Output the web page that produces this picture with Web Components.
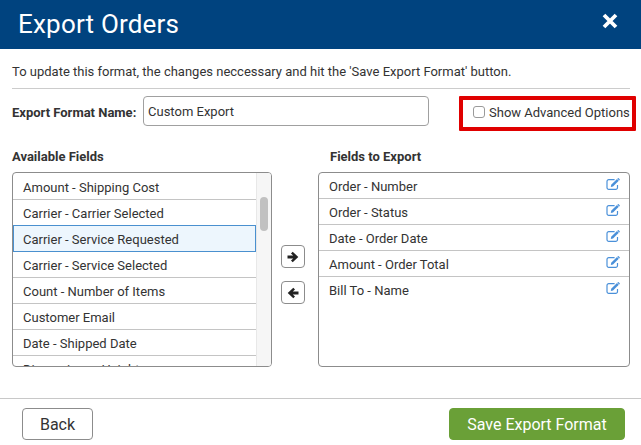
<!DOCTYPE html>
<html>
<head>
<meta charset="utf-8">
<title>Export Orders</title>
<style>
  html, body { margin: 0; padding: 0; background: #fff; }
  body { font-family: Roboto, "Liberation Sans", sans-serif; color: #333; overflow: hidden; }
</style>
</head>
<body>
<export-dialog></export-dialog>
<script>
  const ICON_EDIT = `<svg width="15" height="12" viewBox="0 0 15 12" fill="none">
    <path d="M11.500 7v2.600A1.800 1.800 0 0 1 9.700 11.400H2.800A1.800 1.800 0 0 1 1 9.600V3.400A1.800 1.800 0 0 1 2.800 1.600H8.600" stroke="#4a90d9" stroke-width="1.200"/>
    <path d="M4.800 9l.4-2.200L11 1l1.800 1.800L7 8.600z" fill="#4a90d9"/>
    <path d="M11.900 .2a.6 .6 0 0 1 .8 0l1 1a.6 .6 0 0 1 0 .8l-.5 .5-1.800-1.800z" fill="#4a90d9"/>
  </svg>`;

  class DialogHeader extends HTMLElement {
    connectedCallback() {
      this.attachShadow({ mode: 'open' }).innerHTML = `
      <style>
        :host { display: flex; align-items: center; justify-content: space-between; height: 49px; background: #00437f; color: #fff; padding: 0 23px 0 18px; }
        h1 { margin: 0; font-size: 26px; font-weight: 400; letter-spacing: .2px; line-height: 49px; }
        svg { display: block; margin-top: -7px; }
      </style>
      <h1><slot></slot></h1>
      <svg width="16" height="16" viewBox="0 0 16 16"><path d="M2 2l12 12M14 2L2 14" stroke="#fff" stroke-width="3.800"/></svg>`;
    }
  }

  class FieldList extends HTMLElement {
    connectedCallback() {
      const scroll = this.hasAttribute('scroll');
      this.attachShadow({ mode: 'open' }).innerHTML = `
      <style>
        :host { display: flex; box-sizing: border-box; height: 195px; border: 1px solid #8c8c8c; border-radius: 4px; overflow: hidden; background: #fff; }
        :host([scroll]) .items { padding-top: 1px; }
        .items { flex: 1; min-width: 0; overflow: hidden; }
        .track { width: 14px; flex: none; position: relative; background: #f6f6f6; border-left: 1px solid #e8e8e8; }
        .thumb { position: absolute; left: 3px; top: 24px; width: 8px; height: 34px; border-radius: 4px; background: #c1c1c1; }
      </style>
      <div class="items"><slot></slot></div>
      ${scroll ? '<div class="track"><div class="thumb"></div></div>' : ''}`;
    }
  }

  class FieldItem extends HTMLElement {
    connectedCallback() {
      const editable = this.hasAttribute('editable');
      this.attachShadow({ mode: 'open' }).innerHTML = `
      <style>
        :host { display: flex; align-items: center; justify-content: space-between; box-sizing: border-box; height: 26px; padding: 2px 10px 0; font-size: 13px; color: #333; border: 0 solid transparent; border-bottom: 1px solid #c4c4c4; white-space: nowrap; }
        :host([selected]) { height: 27px; margin-top: -1px; padding-left: 9px; border: 1px solid #4a90cf; background: #edf6fd; }
        :host([editable]) { padding: 2px 8px 0 10px; }
        :host([last]) { border-bottom-color: transparent; }
        svg { display: block; margin-top: -5px; }
      </style>
      <span><slot></slot></span>${editable ? ICON_EDIT : ''}`;
    }
  }

  class ArrowButton extends HTMLElement {
    connectedCallback() {
      const left = this.getAttribute('dir') === 'left';
      this.attachShadow({ mode: 'open' }).innerHTML = `
      <style>
        :host { display: flex; align-items: center; justify-content: center; box-sizing: border-box; width: 24px; height: 23px; border: 1px solid #8c8c8c; border-radius: 4px; background: #fff; }
        svg { display: block; ${left ? 'transform: scaleX(-1);' : ''} }
      </style>
      <svg width="12" height="12" viewBox="0 0 12 12"><path d="M.500 4.600H6.200L4 2.400 5.700 .7 11.300 6 5.700 11.300 4 9.600 6.200 7.400H.5z" fill="#222"/></svg>`;
    }
  }

  class FooterButton extends HTMLElement {
    connectedCallback() {
      this.attachShadow({ mode: 'open' }).innerHTML = `
      <style>
        :host { display: flex; align-items: center; justify-content: center; box-sizing: border-box; height: 32px; border-radius: 4px; font-size: 16px; border: 1px solid #8c8c8c; color: #333; background: #fff; }
        :host([primary]) { border-color: #6aa037; background: #6aa037; color: #fff; }
      </style>
      <slot></slot>`;
    }
  }

  class ExportDialog extends HTMLElement {
    connectedCallback() {
      const avail = ['Amount - Shipping Cost', 'Carrier - Carrier Selected', 'Carrier - Service Requested', 'Carrier - Service Selected', 'Count - Number of Items', 'Customer Email', 'Date - Shipped Date', 'Dimensions - Height'];
      const chosen = ['Order - Number', 'Order - Status', 'Date - Order Date', 'Amount - Order Total', 'Bill To - Name'];
      this.attachShadow({ mode: 'open' }).innerHTML = `
      <style>
        :host { display: block; width: 641px; height: 445px; box-sizing: border-box; font-size: 13px; color: #333; }
        .intro { margin: 0 11px 0 12px; height: 39px; line-height: 46px; border-bottom: 1px solid #ccc; white-space: nowrap; }
        .name-row { display: flex; align-items: flex-start; margin: 7px 4px 0 12px; height: 35px; }
        label { font-weight: 700; margin-top: 9px; width: 131px; flex: none; }
        .input { box-sizing: border-box; width: 286px; height: 30px; border: 1px solid #a0a0a0; border-radius: 4px; padding: 0 4px; line-height: 30px; flex: none; }
        .advanced { box-sizing: border-box; margin-left: 30px; width: 177px; height: 35px; border: 4px solid #e00000; border-radius: 1px; display: flex; align-items: center; padding: 0 0 3px 10px; gap: 4px; white-space: nowrap; }
        .check { width: 12px; height: 12px; box-sizing: border-box; border: 1px solid #9a9a9a; border-radius: 3px; flex: none; }
        .columns { display: grid; grid-template-columns: 260px 46px 312px; margin: 18px 0 0 12px; }
        h2 { margin: 0; font-size: 13px; font-weight: 700; line-height: 16px; height: 23px; }
        .right h2 { margin-left: 12px; }
        .arrows { display: flex; flex-direction: column; align-items: center; gap: 13px; padding: 96px 4px 0 0; }
        .footer { margin-top: 31px; border-top: 1px solid #c8c8c8; display: flex; justify-content: space-between; padding: 9px 16px 0 22px; }
        .back { width: 71px; }
        .save { width: 176px; }
      </style>
      <dialog-header>Export Orders</dialog-header>
      <div class="intro">To update this format, the changes neccessary and hit the 'Save Export Format' button.</div>
      <div class="name-row">
        <label>Export Format Name:</label>
        <div class="input">Custom Export</div>
        <div class="advanced"><span class="check"></span><span>Show Advanced Options</span></div>
      </div>
      <div class="columns">
        <div>
          <h2>Available Fields</h2>
          <field-list scroll>${avail.map((f, i) => `<field-item ${i === 2 ? 'selected' : ''}>${f}</field-item>`).join('')}</field-list>
        </div>
        <div class="arrows"><arrow-button></arrow-button><arrow-button dir="left"></arrow-button></div>
        <div class="right">
          <h2>Fields to Export</h2>
          <field-list>${chosen.map((f, i) => `<field-item editable ${i === chosen.length - 1 ? 'last' : ''}>${f}</field-item>`).join('')}</field-list>
        </div>
      </div>
      <div class="footer">
        <footer-button class="back">Back</footer-button>
        <footer-button class="save" primary>Save Export Format</footer-button>
      </div>`;
    }
  }

  customElements.define('dialog-header', DialogHeader);
  customElements.define('field-list', FieldList);
  customElements.define('field-item', FieldItem);
  customElements.define('arrow-button', ArrowButton);
  customElements.define('footer-button', FooterButton);
  customElements.define('export-dialog', ExportDialog);
</script>
</body>
</html>
